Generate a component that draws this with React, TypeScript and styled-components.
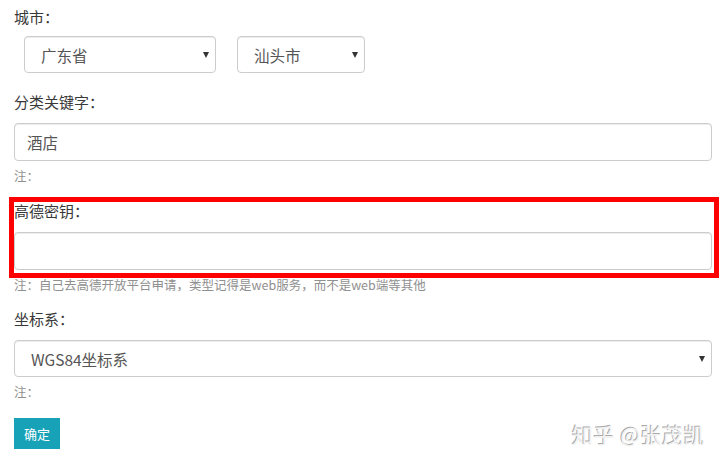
import React from "react";
import styled, {createGlobalStyle} from "styled-components";

const GlobalStyle = createGlobalStyle`
  html, body {
    margin: 0;
    padding: 0;
    background: #fff;
  }

  body {
    font-family: "Noto Sans CJK SC", "Noto Sans", sans-serif;
    color: #333;
  }
`;

const Page = styled.div`
  position: relative;
  width: 722px;
  height: 465px;
  box-sizing: border-box;
  padding: 6px 10px 0 14px;
  overflow: hidden;
`;

const FormGroup = styled.div<{ $gap?: number }>`
  display: flex;
  flex-flow: column nowrap;
  margin-bottom: ${p => p.$gap ?? 0}px;
`;

const Highlighted = styled.div`
  position: relative;
  display: flex;
  flex-flow: column nowrap;

  &::after {
    content: "";
    position: absolute;
    top: -3px;
    left: -5px;
    right: -7px;
    bottom: -8px;
    border: 5px solid #f00;
    pointer-events: none;
  }
`;

const Label = styled.label<{ $space?: number }>`
  display: block;
  font-size: 15px;
  line-height: 22px;
  margin-bottom: ${p => p.$space ?? 10}px;
  color: #383838;
`;

const CityRow = styled.div`
  display: flex;
  flex-flow: row nowrap;
  gap: 21px;
  padding-left: 10px;
  margin-bottom: 18px;
`;

const SelectWrap = styled.div<{ $width?: number }>`
  position: relative;
  width: ${p => (p.$width ? `${p.$width}px` : "100%")};

  &::after {
    content: "";
    position: absolute;
    right: 7px;
    top: 16px;
    border-left: 3.5px solid transparent;
    border-right: 3.5px solid transparent;
    border-top: 6px solid #333;
    pointer-events: none;
  }
`;

const Select = styled.select`
  appearance: none;
  -webkit-appearance: none;
  display: block;
  width: 100%;
  height: 37px;
  box-sizing: border-box;
  padding: 0 24px 0 16px;
  font-family: "Noto Sans CJK SC", "Noto Sans", sans-serif;
  font-size: 15.5px;
  color: #555;
  background: #fff;
  border: 1px solid #ccc;
  border-radius: 4px;
  box-shadow: inset 0 1px 1px rgba(0, 0, 0, 0.075);
  outline: none;
`;

const Input = styled.input`
  display: block;
  width: 100%;
  height: 38px;
  box-sizing: border-box;
  padding: 0 12px;
  font-family: "Noto Sans CJK SC", "Noto Sans", sans-serif;
  font-size: 15.5px;
  color: #555;
  background: #fff;
  border: 1px solid #ccc;
  border-radius: 4px;
  box-shadow: inset 0 1px 1px rgba(0, 0, 0, 0.075);
  outline: none;
`;

const Help = styled.div`
  margin-top: 6px;
  font-size: 12.5px;
  line-height: 18px;
  color: #909090;
`;

const SubmitButton = styled.button`
  display: block;
  height: 31px;
  padding: 0 10px;
  font-family: "Noto Sans CJK SC", "Noto Sans", sans-serif;
  font-size: 13px;
  color: #fff;
  background: #17a2b8;
  border: none;
  border-radius: 0;
`;

const Watermark = styled.div`
  position: absolute;
  right: 17px;
  top: 419px;
  font-size: 21px;
  letter-spacing: 0.5px;
  color: #f2f2f2;
  text-shadow: -1px -1px 0 #aaa, 1px 1px 0 #fff;
  pointer-events: none;
`;

export default function App() {
    return (
        <>
            <GlobalStyle/>
            <Page>
                <Label $space={8}>城市：</Label>
                <CityRow>
                    <SelectWrap $width={192}>
                        <Select defaultValue="gd">
                            <option value="gd">广东省</option>
                        </Select>
                    </SelectWrap>
                    <SelectWrap $width={128}>
                        <Select defaultValue="st">
                            <option value="st">汕头市</option>
                        </Select>
                    </SelectWrap>
                </CityRow>

                <FormGroup $gap={15}>
                    <Label>分类关键字：</Label>
                    <Input type="text" defaultValue="酒店"/>
                    <Help>注：</Help>
                </FormGroup>

                <FormGroup $gap={14}>
                    <Highlighted>
                        <Label>高德密钥：</Label>
                        <Input type="text"/>
                    </Highlighted>
                    <Help>注：自己去高德开放平台申请，类型记得是web服务，而不是web端等其他</Help>
                </FormGroup>

                <FormGroup $gap={17}>
                    <Label>坐标系：</Label>
                    <SelectWrap>
                        <Select defaultValue="wgs84">
                            <option value="wgs84">WGS84坐标系</option>
                        </Select>
                    </SelectWrap>
                    <Help>注：</Help>
                </FormGroup>

                <SubmitButton>确定</SubmitButton>

                <Watermark>知乎 @张茂凯</Watermark>
            </Page>
        </>
    );
}
